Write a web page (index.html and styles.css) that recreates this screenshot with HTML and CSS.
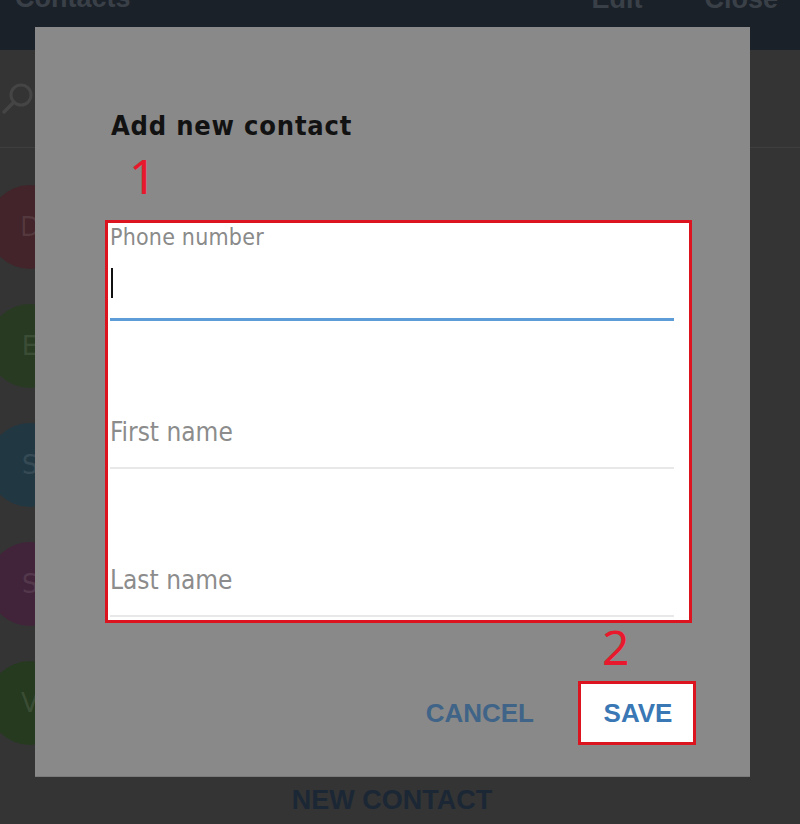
FILE: index.html
```html
<!DOCTYPE html>
<html lang="en">
<head>
<meta charset="utf-8">
<title>Add new contact</title>
<link rel="stylesheet" href="styles.css">
</head>
<body>
<div class="app">
  <header class="topbar">
    <span class="brand">Contacts</span>
    <nav class="top-actions"><span>Edit</span><span>Close</span></nav>
  </header>
  <div class="search">
    <svg class="search-icon" width="40" height="40" viewBox="0 0 40 40" aria-hidden="true">
      <circle cx="21" cy="17" r="10" fill="none" stroke="#454545" stroke-width="3"/>
      <line x1="14" y1="24" x2="4" y2="34" stroke="#454545" stroke-width="3.5" stroke-linecap="round"/>
    </svg>
  </div>
  <ul class="list">
    <li class="row"><span class="avatar av-red">D</span></li>
    <li class="row"><span class="avatar av-green">E</span></li>
    <li class="row"><span class="avatar av-teal">S</span></li>
    <li class="row"><span class="avatar av-pink">S</span></li>
    <li class="row"><span class="avatar av-lime">V</span></li>
  </ul>
  <div class="footer">NEW CONTACT</div>
</div>

<div class="dialog">
  <h2 class="title">Add new contact</h2>
  <div class="step step-one">1</div>
  <div class="form-box">
    <div class="field phone">
      <label class="label">Phone number</label>
      <div class="input"><span class="caret"></span></div>
    </div>
    <div class="field name">
      <div class="placeholder">First name</div>
    </div>
    <div class="field name">
      <div class="placeholder">Last name</div>
    </div>
  </div>
  <div class="actions">
    <button class="btn cancel">CANCEL</button>
    <div class="save-group">
      <div class="step step-two">2</div>
      <button class="btn save">SAVE</button>
    </div>
  </div>
</div>
</body>
</html>
```
FILE: styles.css
```css
html, body {
  margin: 0;
  padding: 0;
}
body {
  width: 800px;
  height: 824px;
  overflow: hidden;
  background: #343434;
  font-family: "Liberation Sans", Arial, sans-serif;
  position: relative;
}
.app {
  display: flex;
  flex-direction: column;
  height: 824px;
}
.topbar {
  height: 50px;
  flex: none;
  background: #1b2129;
  display: flex;
  justify-content: space-between;
  align-items: flex-start;
  padding: 0 22px 0 15px;
  overflow: hidden;
  color: #3a4047;
  font-weight: bold;
  font-size: 27px;
  line-height: 30px;
}
.brand {
  margin-top: -17px;
}
.top-actions {
  display: flex;
  gap: 62px;
  margin-top: -16px;
}
.search {
  height: 97px;
  flex: none;
  border-bottom: 1px solid #3e3e3e;
  display: flex;
  align-items: center;
}
.search-icon {
  display: block;
  margin-top: -1px;
}
.list {
  list-style: none;
  margin: 0;
  padding: 0;
  flex: 1;
  overflow: hidden;
}
.row {
  height: 119px;
  box-sizing: border-box;
  padding-top: 37px;
}
.avatar {
  display: flex;
  align-items: center;
  justify-content: center;
  width: 84px;
  height: 84px;
  border-radius: 50%;
  margin-left: -12px;
  color: rgba(255, 255, 255, 0.1);
  font-family: "DejaVu Sans", sans-serif;
  font-size: 26px;
}
.av-red { background: #42242a; }
.av-green { background: #283b22; }
.av-teal { background: #213843; }
.av-pink { background: #42243a; }
.av-lime { background: #263a20; }
.footer {
  height: 48px;
  flex: none;
  text-align: center;
  padding-right: 16px;
  font-weight: bold;
  font-size: 27px;
  line-height: 48px;
  color: #1b2734;
}

/* dialog */
.dialog {
  position: absolute;
  left: 35px;
  top: 27px;
  width: 715px;
  height: 749px;
  box-sizing: border-box;
  padding: 83px 0 0 70px;
  background: #898989;
  box-shadow: 0 1px 0 #7a7a7a;
  font-family: "DejaVu Sans Condensed", "DejaVu Sans", sans-serif;
  font-stretch: condensed;
}
.title {
  margin: 0 0 0 6px;
  font-size: 27px;
  line-height: 32px;
  font-weight: bold;
  letter-spacing: 0.8px;
  color: #121212;
}
.step {
  font-family: "Noto Sans", sans-serif;
  font-stretch: normal;
  font-size: 48px;
  line-height: 48px;
  height: 48px;
  color: #e8192c;
}
.step-one {
  margin: 10px 0 0 24px;
}
.form-box {
  margin-top: 20px;
  width: 564px;
  border: 3px solid #dc1420;
  background: #ffffff;
  padding: 1px 15px 3px 2px;
}
.label {
  display: block;
  font-size: 23px;
  line-height: 26px;
  letter-spacing: 0.2px;
  color: #8a8a8a;
}
.input {
  height: 50px;
  padding-top: 18px;
  border-bottom: 3px solid #5d9cd6;
}
.caret {
  display: block;
  width: 2px;
  height: 30px;
  margin-left: 1px;
  background: #111111;
}
.field.name {
  padding-top: 96px;
}
.placeholder {
  font-size: 26px;
  line-height: 30px;
  color: #8c8c8c;
  padding-bottom: 20px;
  border-bottom: 2px solid #e8e8e8;
}
.actions {
  display: flex;
  justify-content: flex-end;
  align-items: flex-end;
  gap: 44px;
  padding-right: 54px;
}
.step-two {
  padding-left: 24px;
  margin-bottom: 10px;
}
.btn {
  font-family: "Liberation Sans", Arial, sans-serif;
  font-weight: bold;
  font-size: 26px;
  border: none;
  background: none;
  padding: 0;
  margin: 0;
  cursor: pointer;
}
.cancel {
  height: 64px;
  line-height: 64px;
  color: #3f6487;
}
.save {
  display: block;
  width: 118px;
  height: 64px;
  box-sizing: border-box;
  border: 3px solid #dc1420;
  background: #ffffff;
  color: #3a78b5;
  text-align: center;
  line-height: 58px;
  padding-left: 2px;
}
```
